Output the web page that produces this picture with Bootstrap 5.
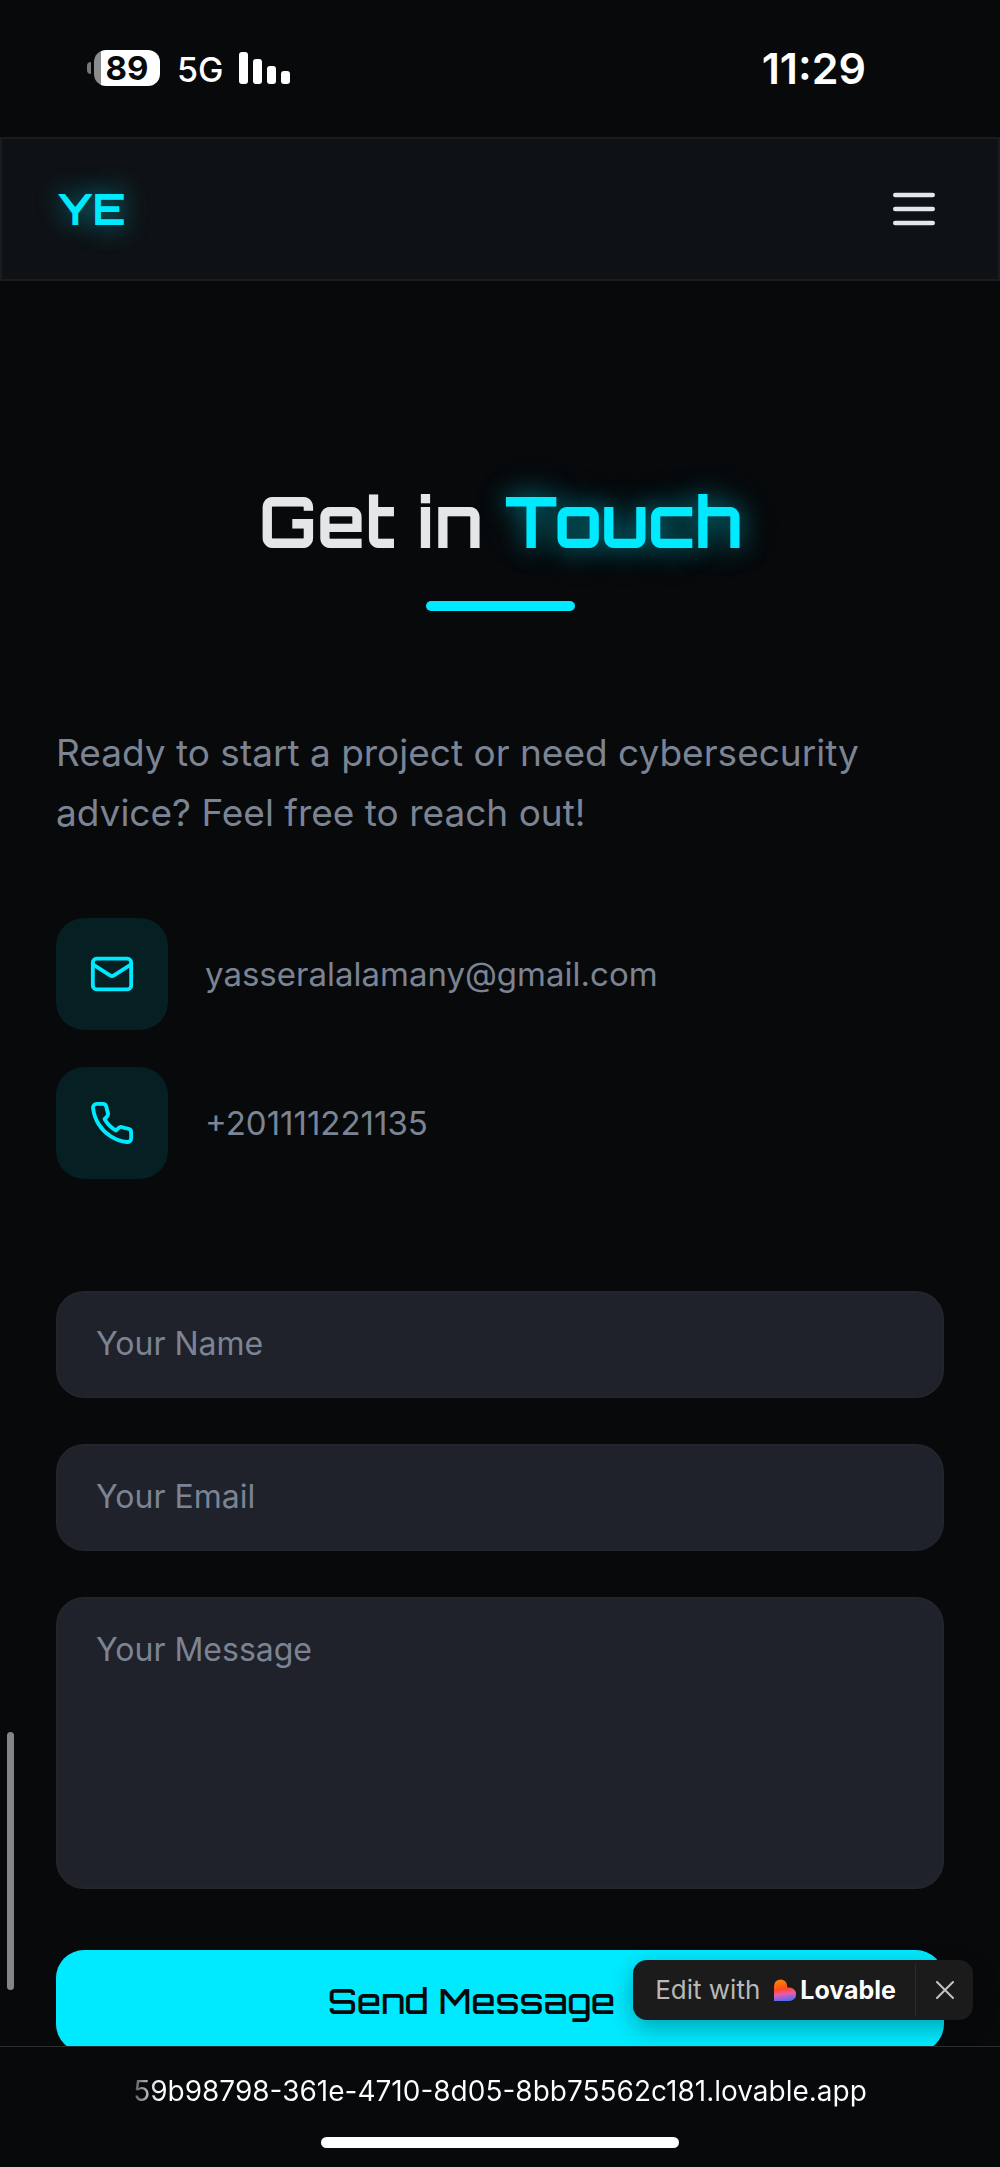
<!DOCTYPE html>
<html lang="en">
<head>
<meta charset="utf-8">
<meta name="viewport" content="width=device-width, initial-scale=1">
<title>Get in Touch</title>
<link href="https://cdn.jsdelivr.net/npm/bootstrap@5.3.0/dist/css/bootstrap.min.css" rel="stylesheet">
<style>
:root{--page:#07090b;--cyan:#00eaff;--muted:#7c8494;--field:#1f222a;--gutter:56px;--display:Orbitron,"DejaVu Sans",sans-serif}
body{background:var(--page);color:#e4e7ea;font-family:Inter,"Liberation Sans",sans-serif}
.status-bar{height:137px;padding:0 134px 2px 87px;color:#fff}
.battery-nub{width:4px;height:12px;border-radius:4px 0 0 4px;background:#77787a;margin-right:3px}
.battery-body{width:66px;height:36px;border-radius:12px;background:linear-gradient(90deg,#8b8c8d 7px,#fff 7px);color:#07090b;font-size:33px;line-height:36px;font-weight:700}
.network-type{font-size:34px;line-height:40px;margin:4px 16px 0 17px;font-weight:500}
.clock-time{font-size:43px;line-height:48px;font-weight:600}
.site-nav{height:144px;background:#0f1215;border:2px solid #1a1c1f;padding:0 var(--gutter)}
.glow-text{color:var(--cyan);text-shadow:0 0 24px rgba(0,234,255,.5),0 0 48px rgba(0,234,255,.2)}
.site-logo{font-family:var(--display);font-weight:700;font-size:43px;line-height:48px;text-decoration:none}
.contact-section{padding:192px var(--gutter) 0}
.section-title{font-family:var(--display);font-weight:700;font-size:70px;line-height:96px;margin:0}
.title-rule{width:149px;height:10px;border-radius:5px;background:var(--cyan);margin:32px auto 0}
.intro-text{font-size:37px;line-height:60px;color:var(--muted);margin:112px 0 0}
.contact-list{margin-top:75px;gap:37px}
.contact-line{gap:37px;font-size:33px;line-height:40px;color:var(--muted)}
.contact-line a{color:inherit;text-decoration:none}
.icon-tile{width:112px;height:112px;border-radius:28px;background:#061f23;color:var(--cyan)}
.contact-form{margin-top:112px;gap:46px}
.contact-form .form-control{background:var(--field);border:2px solid #22252b;border-radius:28px;color:#e4e7ea;font-size:32px;line-height:48px;padding:27px 38px 28px;resize:none}
.contact-form .form-control::placeholder{color:var(--muted);opacity:1}
.contact-form textarea.form-control{height:292px}
.send-button{margin-top:15px;height:102px;border:0;border-radius:28px;background:var(--cyan);color:#07090b;font-family:var(--display);font-weight:500;font-size:35px;line-height:48px;gap:19px;padding:0}
.scroll-thumb{left:7px;bottom:56px;width:7px;height:258px;border-radius:4px;background:#848587}
.edit-badge{right:27px;bottom:26px;height:60px;box-shadow:0 8px 24px rgba(0,0,0,.3);border-radius:14px;background:#1b1b1b}
.edit-link{padding:0 19px 0 22px;color:#b8b8b8;font-size:26px;line-height:32px;text-decoration:none}
.edit-link strong{color:#fff;font-size:25px;font-weight:700;margin-left:4px}
.edit-link svg{margin-left:14px}
.close-badge{width:58px;height:52px;border:0;border-left:1px solid #2b2b2b;background:none;color:#c4c4c4}
.address-bar{height:121px;border-top:1px solid #2a2c2e;color:#fff}
.address-text{margin-top:22px;font-size:28px;line-height:44px;background:linear-gradient(90deg,#555 0,#fff 26px);-webkit-background-clip:text;background-clip:text;color:transparent}
.home-indicator{width:358px;height:11px;border-radius:6px;background:#fff;margin-bottom:19px}
</style>
</head>
<body>
<div class="vh-100 d-flex flex-column overflow-hidden">
  <div class="status-bar d-flex align-items-center justify-content-between flex-shrink-0">
    <div class="d-flex align-items-center">
      <span class="battery-nub"></span>
      <span class="battery-body text-center">89</span>
      <span class="network-type">5G</span>
      <svg width="51" height="32" viewBox="0 0 51 32" fill="#fff" aria-hidden="true"><rect width="9" height="32" rx="3"/><rect x="14" y="7" width="9" height="25" rx="3"/><rect x="28" y="14" width="9" height="18" rx="3"/><rect x="42" y="19" width="9" height="13" rx="3"/></svg>
    </div>
    <time class="clock-time">11:29</time>
  </div>

  <nav class="site-nav d-flex align-items-center justify-content-between flex-shrink-0">
    <a class="site-logo glow-text" href="#">YE</a>
    <button class="btn p-0 border-0 d-flex" type="button" aria-label="Menu">
      <svg width="56" height="56" viewBox="0 0 24 24" fill="none" stroke="#e4e7ea" stroke-width="2" stroke-linecap="round"><path d="M4 6h16M4 12h16M4 18h16"/></svg>
    </button>
  </nav>

  <main class="position-relative flex-grow-1 overflow-hidden">
    <section class="contact-section">
      <h1 class="section-title text-center">Get in <span class="glow-text">Touch</span></h1>
      <div class="title-rule"></div>
      <p class="intro-text">Ready to start a project or need cybersecurity advice? Feel free to reach out!</p>
      <div class="contact-list d-flex flex-column">
        <div class="contact-line d-flex align-items-center">
          <span class="icon-tile d-flex align-items-center justify-content-center">
            <svg width="46" height="46" viewBox="0 0 24 24" fill="none" stroke="currentColor" stroke-width="2" stroke-linecap="round" stroke-linejoin="round"><rect x="2" y="4" width="20" height="16" rx="2"/><path d="m22 7-8.97 5.7a1.94 1.94 0 0 1-2.06 0L2 7"/></svg>
          </span>
          <a href="mailto:yasseralalamany@gmail.com">yasseralalamany@gmail.com</a>
        </div>
        <div class="contact-line d-flex align-items-center">
          <span class="icon-tile d-flex align-items-center justify-content-center">
            <svg width="46" height="46" viewBox="0 0 24 24" fill="none" stroke="currentColor" stroke-width="2" stroke-linecap="round" stroke-linejoin="round"><path d="M22 16.92v3a2 2 0 0 1-2.18 2 19.79 19.79 0 0 1-8.63-3.07 19.5 19.5 0 0 1-6-6 19.79 19.79 0 0 1-3.07-8.67A2 2 0 0 1 4.11 2h3a2 2 0 0 1 2 1.72 12.84 12.84 0 0 0 .7 2.81 2 2 0 0 1-.45 2.11L8.09 9.91a16 16 0 0 0 6 6l1.27-1.27a2 2 0 0 1 2.11-.45 12.84 12.84 0 0 0 2.81.7A2 2 0 0 1 22 16.92z"/></svg>
          </span>
          <a href="tel:+201111221135">+201111221135</a>
        </div>
      </div>
      <form class="contact-form d-flex flex-column">
        <input class="form-control" type="text" placeholder="Your Name" aria-label="Your Name">
        <input class="form-control" type="email" placeholder="Your Email" aria-label="Your Email">
        <textarea class="form-control" placeholder="Your Message" aria-label="Your Message"></textarea>
        <button class="btn send-button w-100 d-flex align-items-center justify-content-center" type="submit">Send Message
          <svg width="38" height="38" viewBox="0 0 24 24" fill="none" stroke="currentColor" stroke-width="2" stroke-linecap="round" stroke-linejoin="round" aria-hidden="true"><path d="m22 2-7 20-4-9-9-4zM22 2 11 13"/></svg>
        </button>
      </form>
    </section>
    <div class="scroll-thumb position-absolute"></div>
    <div class="edit-badge position-absolute d-flex align-items-center">
      <a class="edit-link d-flex align-items-center" href="#">Edit with
        <svg width="22" height="22" viewBox="0 0 22 22" aria-hidden="true"><defs><linearGradient id="heart" x1=".35" y1="0" x2=".5" y2="1"><stop offset=".1" stop-color="#ff7a00"/><stop offset=".45" stop-color="#ff4a24"/><stop offset=".68" stop-color="#e85bb5"/><stop offset="1" stop-color="#4b6cf0"/></linearGradient></defs><path fill="url(#heart)" d="M0 22V7a6.600 6.600 0 0 1 13.200 0v1.500h2.200a6.700 6.700 0 0 1 0 13.500z"/></svg>
        <strong>Lovable</strong></a>
      <button class="close-badge d-flex align-items-center justify-content-center p-0" type="button" aria-label="Close">
        <svg width="18" height="18" viewBox="0 0 18 18" fill="none" stroke="currentColor" stroke-width="2" stroke-linecap="round"><path d="m1 1 16 16M17 1 1 17"/></svg>
      </button>
    </div>
  </main>

  <footer class="address-bar d-flex flex-column align-items-center justify-content-between flex-shrink-0">
    <span class="address-text">59b98798-361e-4710-8d05-8bb75562c181.lovable.app</span>
    <span class="home-indicator"></span>
  </footer>
</div>
<script src="https://cdn.jsdelivr.net/npm/bootstrap@5.3.0/dist/js/bootstrap.bundle.min.js"></script>
</body>
</html>
